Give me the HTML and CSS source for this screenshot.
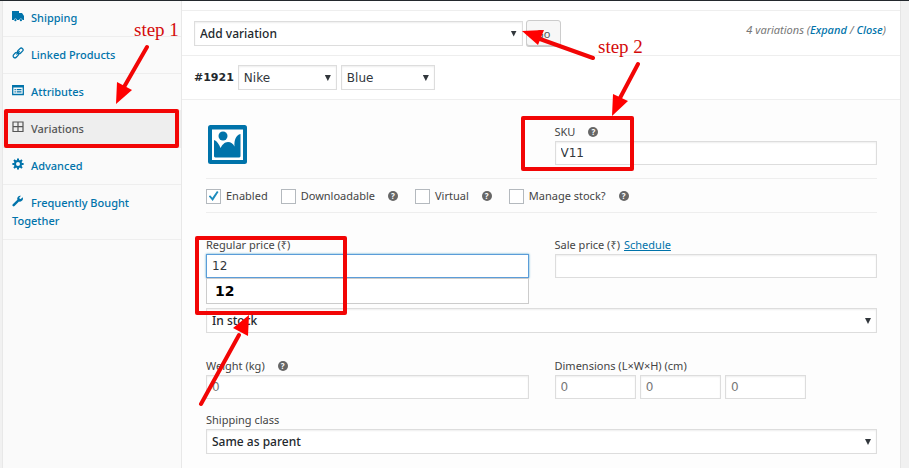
FILE: index.html
```html
<!DOCTYPE html>
<html lang="en">
<head>
<meta charset="utf-8">
<title>Product data – Variations</title>
<link rel="stylesheet" href="styles.css">
</head>
<body>
<main class="panel">
  <nav class="tabs">
    <a class="tab" href="#"><svg class="tab-icon" viewBox="0 0 12 12"><path d="M0 1h7v2h3l2 3v4h-1.5a1.6 1.6 0 0 0-3.2 0H5a1.6 1.6 0 0 0-3.2 0H0z" fill="currentColor"/><circle cx="3.4" cy="10.2" r="1.1" fill="currentColor"/><circle cx="8.9" cy="10.2" r="1.1" fill="currentColor"/></svg>Shipping</a>
    <a class="tab" href="#"><svg class="tab-icon" viewBox="0 0 12 12" fill="none" stroke="currentColor" stroke-width="1.3"><rect x="5.2" y="2" width="6.2" height="3.6" rx="1.8" transform="rotate(-45 8.3 3.8)"/><rect x=".8" y="6.2" width="6.2" height="3.6" rx="1.8" transform="rotate(-45 3.9 8)"/><path d="M4.4 7.5l3.2-3.2"/></svg>Linked Products</a>
    <a class="tab" href="#"><svg class="tab-icon" viewBox="0 0 12 12"><path d="M.7 1.7h10.6v8.8H.7z" fill="none" stroke="currentColor" stroke-width="1.3"/><path d="M.5 1.2h11v2.2H.5zM2.5 5h1.3v1.2H2.5zM4.7 5h4.8v1.2H4.7zM2.5 7.3h1.3v1.2H2.5zM4.7 7.3h4.8v1.2H4.7z" fill="currentColor"/></svg>Attributes</a>
    <a class="tab tab-active" href="#"><svg class="tab-icon" viewBox="0 0 12 12"><path d="M1 1h10v9.5H1zM6 1v9.500M1 5.700h10" fill="none" stroke="currentColor" stroke-width="1.200"/></svg>Variations</a>
    <a class="tab" href="#"><svg class="tab-icon" viewBox="0 0 12 12"><circle cx="6" cy="6" r="3" fill="none" stroke="currentColor" stroke-width="2"/><path d="M6 .4v2M6 9.600v2M.4 6h2M9.600 6h2M2 2l1.500 1.500M8.500 8.500L10 10M10 2L8.500 3.500M3.500 8.500L2 10" stroke="currentColor" stroke-width="2"/></svg>Advanced</a>
    <a class="tab" href="#"><svg class="tab-icon" viewBox="0 0 12 12"><path d="M10.600 2.300L8.800 4.100 7.600 3.700 7.300 2.600 9 .8A3 3 0 0 0 5.400 4.700L.8 9.300a1.200 1.200 0 0 0 1.700 1.700L7 6.500a3 3 0 0 0 3.600-4.200z" fill="currentColor"/></svg>Frequently Bought Together</a>
  </nav>

  <section class="content">
    <div class="toolbar">
      <span class="select-wrap action"><select class="control strong" aria-label="Bulk action"><option>Add variation</option></select></span>
      <button class="go" type="button">Go</button>
      <p class="count">4 variations (<a href="#">Expand</a> / <a href="#">Close</a>)</p>
    </div>

    <div class="variation-head">
      <strong class="number">#1921</strong>
      <span class="select-wrap brand"><select class="control" aria-label="Brand"><option>Nike</option></select></span>
      <span class="select-wrap colour"><select class="control" aria-label="Colour"><option>Blue</option></select></span>
    </div>

    <form class="variation">
      <div class="columns identity">
        <button class="upload" type="button" aria-label="Upload image"><svg viewBox="0 0 39 39"><rect width="39" height="39" rx="2.500" fill="#0073aa"/><path d="M4 4.500h31V35H4z" fill="#fff"/><circle cx="15" cy="11" r="4.500" fill="#0073aa"/><path d="M6 15c3 1 5 4 6.500 8 1.500-3 4-6 7.500-6 3 0 5 1.500 6.500 4.500C26 15 28 10 32.500 9v22c0 1-1 1.500-2 1.500h-22C7 32.500 6 32 6 31z" fill="#0073aa"/></svg></button>
        <div class="field">
          <div class="label-row"><label for="sku">SKU</label><span class="help">?</span></div>
          <input class="control" id="sku" type="text" value="V11">
        </div>
      </div>

      <div class="options">
        <label class="option"><input type="checkbox" checked>Enabled</label>
        <label class="option"><input type="checkbox">Downloadable</label><span class="help">?</span>
        <label class="option"><input type="checkbox">Virtual</label><span class="help">?</span>
        <label class="option"><input type="checkbox">Manage stock?</label><span class="help">?</span>
      </div>

      <div class="columns prices">
        <div class="field">
          <div class="label-row"><label for="regular">Regular price (₹)</label></div>
          <input class="control focused" id="regular" type="text" value="12">
          <div class="suggestions">12</div>
        </div>
        <div class="field">
          <div class="label-row"><label for="sale">Sale price (₹)</label><a class="schedule" href="#">Schedule</a></div>
          <input class="control" id="sale" type="text">
        </div>
      </div>

      <span class="select-wrap stock"><select class="control strong" aria-label="Stock status"><option>In stock</option></select></span>

      <div class="columns measures">
        <div class="field">
          <div class="label-row"><label for="weight">Weight (kg)</label><span class="help">?</span></div>
          <input class="control" id="weight" type="text" placeholder="0">
        </div>
        <div class="field">
          <div class="label-row"><label for="length">Dimensions (L×W×H) (cm)</label></div>
          <div class="dimensions">
            <input class="control" id="length" type="text" placeholder="0">
            <input class="control" type="text" placeholder="0" aria-label="Width">
            <input class="control" type="text" placeholder="0" aria-label="Height">
          </div>
        </div>
      </div>

      <div class="field shipping">
        <div class="label-row"><label for="class">Shipping class</label></div>
        <span class="select-wrap"><select class="control strong" id="class"><option>Same as parent</option></select></span>
      </div>
    </form>
  </section>
</main>

<svg class="notes" width="909" height="468" viewBox="0 0 909 468">
  <g fill="none" stroke="#f20505" stroke-width="4" stroke-linejoin="round" stroke-linecap="round">
    <rect x="6" y="111" width="171" height="35"/>
    <rect x="523" y="118" width="109" height="51"/>
    <rect x="197" y="238" width="148" height="75"/>
    <path d="M147 47L124 87M593 58L540 39M638 64L620 98M201 404L239 335"/>
  </g>
  <g fill="#f00">
    <path d="M116 104l1-22 15 8zM522 31l22-1-6 15zM612 116l1-22 15 7zM249 315l-1 21-15-8z"/>
  </g>
  <text x="134" y="36">step 1</text>
  <text x="598" y="53">step 2</text>
</svg>
</body>
</html>
```

FILE: styles.css
```css
* { box-sizing: border-box; }

body {
  margin: 0;
  background: #f1f1f1;
  color: #444;
  font: 11px/18px "Noto Sans", "Open Sans", sans-serif;
  overflow: hidden;
}

a { color: #0073aa; }

.panel {
  display: flex;
  min-height: 100vh;
  padding: 0 8px 0 2px;
  border-top: 1px solid #23282d;
}

.tabs {
  flex: none;
  width: 180px;
  background: #fafafa;
  border: solid #e8e8e8;
  border-width: 0 1px;
}

.tab {
  display: block;
  padding: 9px 9px;
  border-bottom: 1px solid #eee;
  font-weight: 500;
  text-decoration: none;
}

.tab:first-child { padding-top: 8px; }
.tab-active { background: #eee; color: #555; }

.tab-icon {
  width: 12px;
  height: 12px;
  margin-right: 7px;
}

.content {
  flex: 1;
  min-width: 0;
  padding-top: 9px;
  background: #fff;
  border-right: 1px solid #e5e5e5;
}

.toolbar, .variation-head {
  display: flex;
  align-items: center;
  height: 45px;
  padding: 0 14px 0 12px;
  border-top: 1px solid #eee;
}

.control {
  display: block;
  width: 100%;
  height: 24px;
  margin: 0;
  padding: 0 5px;
  appearance: none;
  background: #fff;
  border: 1px solid #ddd;
  border-radius: 0;
  box-shadow: inset 0 1px 2px rgba(0, 0, 0, .07);
  color: #32373c;
  font: 12px "DejaVu Sans", sans-serif;
  outline: 0;
}

.control::placeholder { color: #777; opacity: 1; }
.control.strong { color: #23282d; font: 500 12px "Noto Sans", sans-serif; }

.select-wrap { display: block; position: relative; }
.select-wrap .control { height: 25px; }

.select-wrap::after {
  content: "";
  position: absolute;
  top: 10px;
  right: 6px;
  width: 6px;
  height: 6px;
  background: #32373c;
  clip-path: polygon(0 0, 100% 0, 50% 100%);
  pointer-events: none;
}

.action { flex: 0 0 47.5%; }

.go {
  height: 26px;
  width: 35px;
  margin-left: 3px;
  padding: 0;
  background: #f7f7f7;
  border: 1px solid #ccc;
  border-radius: 3px;
  box-shadow: 0 1px 0 #ccc;
  color: #555;
  font: 11px "Noto Sans", sans-serif;
}

.count {
  margin: 0 0 6px auto;
  color: #777;
  font-style: italic;
}

.count a { font-weight: 500; text-decoration: none; }

.variation-head { height: 44px; gap: 4px; }
.number { color: #23282d; font: bold 11px/18px "DejaVu Sans", sans-serif; }
.brand { width: 99px; }
.colour { width: 94px; }

.variation {
  min-height: 369px;
  padding: 23px 23px 12px 24px;
  background: #fdfdfd;
  border-top: 1px solid #eee;
}

.columns {
  display: grid;
  grid-template-columns: 1fr 1fr;
  gap: 26px;
}

.field { position: relative; min-width: 0; }
.label-row { display: flex; align-items: center; height: 18px; gap: 4px; }
.label-row .help { margin-left: 9px; }

.help {
  width: 10px;
  height: 10px;
  background: #666;
  border-radius: 50%;
  color: #fff;
  font: bold 8px/10px "Noto Sans", sans-serif;
  text-align: center;
}

.identity { padding-bottom: 12px; }

.upload {
  width: 39px;
  height: 39px;
  margin: 2px;
  padding: 0;
  background: none;
  border: 0;
}

.upload svg { display: block; }

.options {
  display: flex;
  align-items: center;
  height: 35px;
  padding-top: 1px;
  border: solid #eee;
  border-width: 1px 0;
}

.option { display: flex; align-items: center; gap: 5px; margin-right: 13px; }
.option + .help { margin-right: 17px; }

.option input {
  appearance: none;
  display: grid;
  place-items: center;
  width: 15px;
  height: 15px;
  margin: 0;
  background: #fff;
  border: 1px solid #b4b9be;
}

.option input:checked::before {
  content: "";
  width: 10px;
  height: 10px;
  background: #1e8cbe;
  clip-path: polygon(0 50%, 20% 45%, 38% 68%, 85% 0, 100% 10%, 42% 100%);
}

.prices { margin-top: 23px; }

.focused {
  border-color: #5b9dd9;
  box-shadow: 0 0 2px rgba(30, 140, 190, .8);
}

.suggestions {
  position: absolute;
  top: 42px;
  left: 0;
  right: 0;
  height: 26px;
  padding: 0 8px;
  background: #fff;
  border: 1px solid #ccc;
  color: #000;
  font: bold 14px/24px "DejaVu Sans", sans-serif;
}

.stock { margin-top: 30px; }
.measures { margin-top: 24px; }
.dimensions { display: flex; gap: 4px; width: 78%; }
.dimensions .control { flex: 1; min-width: 0; }
.shipping { margin-top: 12px; }

.notes {
  position: absolute;
  top: 0;
  left: 0;
  pointer-events: none;
}

.notes text {
  fill: #d40a0a;
  font: 19px "Liberation Serif", serif;
}
```
